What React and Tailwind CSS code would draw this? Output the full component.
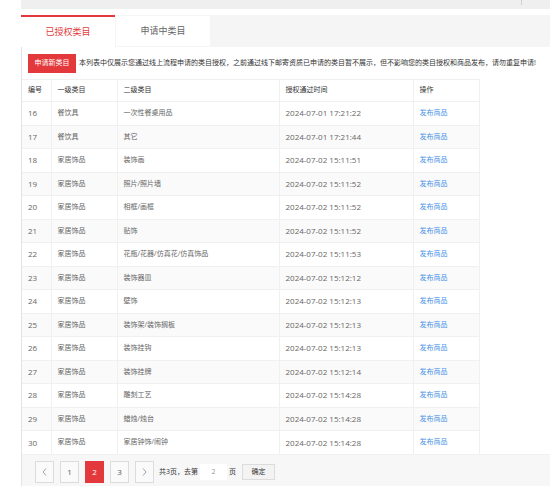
import React from 'react';

const ROWS = [
  [16, '餐饮具', '一次性餐桌用品', '2024-07-01 17:21:22'],
  [17, '餐饮具', '其它', '2024-07-01 17:21:44'],
  [18, '家居饰品', '装饰画', '2024-07-02 15:11:51'],
  [19, '家居饰品', '照片/照片墙', '2024-07-02 15:11:52'],
  [20, '家居饰品', '相框/画框', '2024-07-02 15:11:52'],
  [21, '家居饰品', '贴饰', '2024-07-02 15:11:52'],
  [22, '家居饰品', '花瓶/花器/仿真花/仿真饰品', '2024-07-02 15:11:53'],
  [23, '家居饰品', '装饰器皿', '2024-07-02 15:12:12'],
  [24, '家居饰品', '壁饰', '2024-07-02 15:12:13'],
  [25, '家居饰品', '装饰架/装饰搁板', '2024-07-02 15:12:13'],
  [26, '家居饰品', '装饰挂钩', '2024-07-02 15:12:13'],
  [27, '家居饰品', '装饰挂牌', '2024-07-02 15:12:14'],
  [28, '家居饰品', '雕刻工艺', '2024-07-02 15:14:28'],
  [29, '家居饰品', '蜡烛/烛台', '2024-07-02 15:14:28'],
  [30, '家居饰品', '家居钟饰/闹钟', '2024-07-02 15:14:28'],
];

const HEAD = ['编号', '一级类目', '二级类目', '授权通过时间', '操作'];
const COLS = ['w-[29px]', 'w-[66px]', 'w-[162px]', 'w-[134px]', 'w-[66px]'];

function PageBtn({ children, active }) {
  return (
    <div
      className={
        active
          ? 'w-[19px] h-[22px] flex items-center justify-center bg-[#e4393c] text-white border border-[#e4393c]'
          : 'w-[19px] h-[22px] flex items-center justify-center bg-[#fafafa] text-[#555] border border-[#dcdcdc]'
      }
    >
      {children}
    </div>
  );
}

export default function App() {
  return (
    <div className="w-[550px] h-[486px] overflow-hidden bg-white pl-[21px] font-['Open_Sans','Noto_Sans_CJK_SC',sans-serif]">
      <div className="relative h-[9px] bg-[#efefef]">
        <div className="absolute left-[500px] top-0 w-px h-[5px] bg-[#cfcfcf]" />
      </div>

      <div className="mt-[6px] h-[32px] bg-[#f5f5f5] flex">
        <div className="w-[94px] bg-white border-t-2 border-[#e4393c] text-[#e4393c] text-[9px] flex items-center justify-center">
          已授权类目
        </div>
        <div className="w-[94px] mt-[1px] mb-[1px] ml-px bg-white text-[#666] text-[9px] flex items-center justify-center">
          申请中类目
        </div>
      </div>

      <div className="border-l border-[#e3e3e3]">
        <div className="flex items-center pt-[7px] pl-[6px]">
          <div className="w-[48px] h-[19px] bg-[#e4393c] text-white text-[7px] flex items-center justify-center">
            申请新类目
          </div>
          <span className="ml-[3px] text-[7px] text-[#333] whitespace-nowrap">
            本列表中仅展示您通过线上流程申请的类目授权，之前通过线下邮寄资质已申请的类目暂不展示，但不影响您的类目授权和商品发布，请勿重复申请!
          </span>
        </div>

        <table className="mt-[6px] table-fixed border-collapse text-[7px] text-[#666]">
          <thead>
            <tr className="h-[22px] border-t border-[#f0f0f0]">
              {HEAD.map((h, i) => (
                <th key={h} className={`${COLS[i]} px-[6px] text-left font-normal text-[#333] border-r border-[#f0f0f0]`}>
                  {h}
                </th>
              ))}
            </tr>
          </thead>
          <tbody>
            {ROWS.map((r, idx) => (
              <tr
                key={r[0]}
                className={`${idx % 2 ? 'bg-[#fafafa]' : 'bg-white'} h-[23.5px] border-t border-[#f0f0f0]`}
              >
                <td className="px-[6px] border-r border-[#f0f0f0] text-[8px]">{r[0]}</td>
                <td className="px-[6px] border-r border-[#f0f0f0]">{r[1]}</td>
                <td className="px-[6px] border-r border-[#f0f0f0]">{r[2]}</td>
                <td className="px-[6px] border-r border-[#f0f0f0] text-[8px]">{r[3]}</td>
                <td className="px-[6px] border-r border-[#f0f0f0] text-[#4a94e6]">发布商品</td>
              </tr>
            ))}
          </tbody>
        </table>

        <div className="h-[40px] bg-[#f7f7f7] border-t border-[#f0f0f0] flex items-start pt-[6px] pl-[13px] text-[7px]">
          <div className="flex items-center gap-[6px] text-[8px]">
            <PageBtn>
              <svg width="5" height="8" viewBox="0 0 5 8" fill="none" stroke="#999" strokeWidth="0.9">
                <path d="M4 0.5 L1 4 L4 7.5" />
              </svg>
            </PageBtn>
            <PageBtn>1</PageBtn>
            <PageBtn active>2</PageBtn>
            <PageBtn>3</PageBtn>
            <PageBtn>
              <svg width="5" height="8" viewBox="0 0 5 8" fill="none" stroke="#999" strokeWidth="0.9">
                <path d="M1 0.5 L4 4 L1 7.5" />
              </svg>
            </PageBtn>
          </div>
          <div className="flex items-center h-[22px] ml-[5px] text-[#333]">
            <span>共3页，去第</span>
            <div className="ml-[2px] w-[27px] h-[16px] bg-white flex items-center justify-center text-[#999]">2</div>
            <span className="ml-[2px]">页</span>
            <div className="ml-[6px] w-[33px] h-[16px] bg-[#f3f3f3] border border-[#dcdcdc] flex items-center justify-center text-[#333]">
              确定
            </div>
          </div>
        </div>
      </div>
    </div>
  );
}
